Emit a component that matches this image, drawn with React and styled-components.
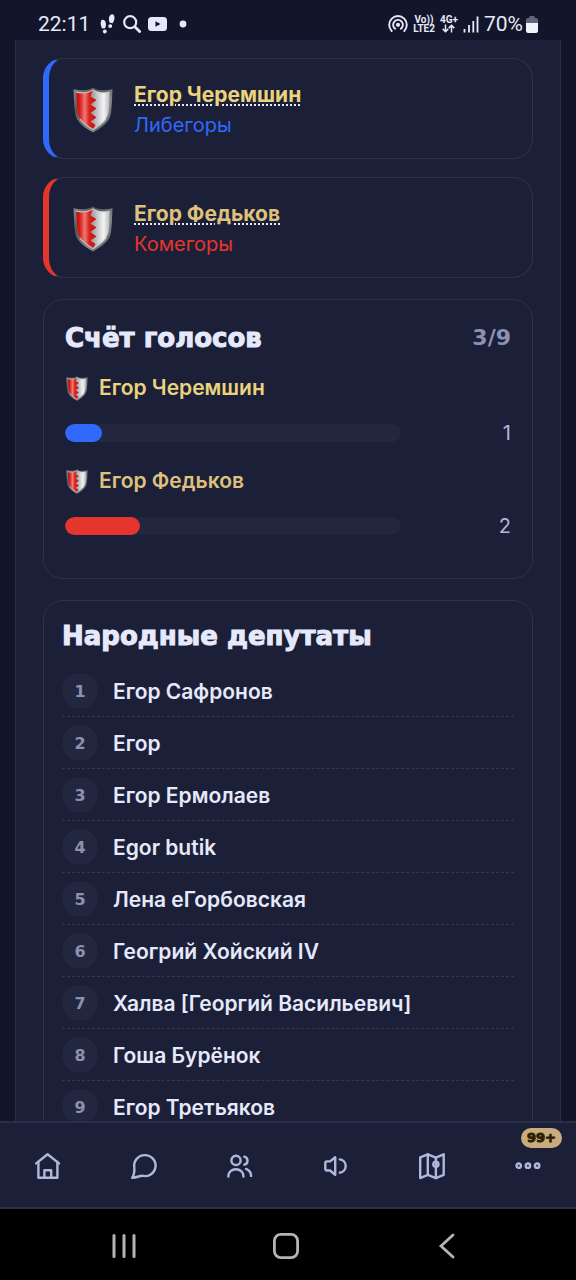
import React from 'react'
import styled, { createGlobalStyle } from 'styled-components';

const GlobalStyle = createGlobalStyle`
* { box-sizing: border-box; }
body {
margin:0;
background-color:#13162a;
color:#e6e9fb;
font-family: Inter, "Noto Sans", sans-serif;
}
`;

const Screen = styled.div`
display: flex;
flex-direction: column;
height:100vh;
`;

const StatusBar = styled.header`
display: flex;
justify-content: space-between;
align-items: center;
height:40px;
padding:8px 38px 0px 38px;
font-family: Roboto, sans-serif;
font-size:21px;
line-height:32px;
flex-shrink:0;
`;

const StatusGroup = styled.div`
display: flex;
align-items: center;
gap:${(p) => p.$gap}px;
`;

const Clock = styled.time`
padding-right:3px;
`;

const Network = styled.span`
display: flex;
flex-direction: column;
align-items: center;
font-size:10px;
font-weight:700;
line-height:9px;
`;

const Page = styled.main`
flex:1;
min-height:0;
overflow:hidden;
display: flex;
flex-direction: column;
gap:21px;
margin:0px 15px;
padding:18px 27px 0px 27px;
border:solid #2c3047;
border-width:0px 1px;
background-color:#1b2038;
`;

const Candidates = styled.section`
display: flex;
flex-direction: column;
gap:18px;
`;

const CandidateCard = styled.article`
display: flex;
align-items: center;
gap:21px;
padding:20px 24px 18px 24px;
border:solid 1px #2e3248;
border-left:solid 6px ${(p) => p.$color};
border-radius:20px;
`;

const CandidateName = styled.a`
display: block;
color:${(p) => p.$color};
font-size:21px;
font-weight:700;
line-height:31px;
text-decoration: underline dotted 2px #e6e9fb;
text-underline-offset: 2px;
`;

const Party = styled.div`
color:${(p) => p.$color};
font-size:20px;
line-height:30px;
`;

const Card = styled.section`
flex-shrink:0;
padding:${(p) => p.$pad};
border:solid 1px #2e3248;
border-radius:20px;
`;

const CardHead = styled.div`
display: flex;
justify-content: space-between;
align-items: center;
margin-bottom:${(p) => p.$space}px;
`;

const Title = styled.h2`
margin:0;
font-family: "DejaVu Sans", sans-serif;
font-size:26px;
font-weight:700;
line-height:34px;
-webkit-text-stroke:1px currentColor;
`;

const Total = styled.span`
color:#8b91b3;
font-family: "DejaVu Sans", sans-serif;
font-size:22px;
font-weight:700;
line-height:30px;
`;

const Score = styled.div`
margin-bottom:18px;
`;

const ScoreName = styled.div`
display: flex;
align-items: center;
gap:11px;
padding-left:1px;
margin-bottom:15px;
color:${(p) => p.$color};
font-size:21px;
font-weight:600;
line-height:30px;
`;

const ScoreRow = styled.div`
display: flex;
align-items: center;
gap:20px;
`;

const Track = styled.div`
flex:1;
height:18px;
border-radius:9px;
background-color:#22263f;
overflow:hidden;
`;

const Fill = styled.div`
height:100%;
border-radius:9px;
background-color:${(p) => p.$color};
`;

const Votes = styled.span`
width:90px;
text-align: right;
color:#b3b8d4;
font-size:20px;
line-height:30px;
`;

const List = styled.ol`
margin:0;
padding:0;
list-style: none;
`;

const Row = styled.li`
display: flex;
align-items: center;
gap:15px;
height:52px;
padding-top:1px;
border-bottom:dashed 1px #34384c;
font-size:21px;
font-weight:600;
`;

const Num = styled.span`
display: flex;
align-items: center;
justify-content: center;
width:36px;
height:36px;
border-radius:50%;
background-color:#22263f;
color:#8b91b3;
font-family: "DejaVu Sans", sans-serif;
font-size:16px;
font-weight:700;
`;

const Nav = styled.nav`
display: flex;
flex-shrink:0;
height:88px;
border:solid #2a2e48;
border-width:2px 0px;
background-color:#1b2038;
`;

const NavLink = styled.a`
position: relative;
flex:1;
display: flex;
align-items: center;
justify-content: center;
padding-top:2px;
color:#b0b7dc;
`;

const Badge = styled.span`
position: absolute;
top:5px;
right:14px;
padding:0px 6px;
border-radius:10px;
background-color:#c9ac7c;
color:#2e2000;
font-family: "DejaVu Sans", sans-serif;
font-size:13px;
font-weight:700;
line-height:20px;
-webkit-text-stroke:1px currentColor;
`;

const SystemBar = styled.footer`
display: flex;
flex-shrink:0;
height:71px;
padding:0px 48px 0px 43px;
background-color:#000;
`;

const SystemBtn = styled.button`
flex:1;
display: flex;
align-items: center;
justify-content: center;
padding:3px 0px 0px 0px;
border: none;
background: none;
color:#b4b4b4;
`;

const Shield = ({ id, width, height }) => (
  <svg width={width} height={height} viewBox="0 0 40 46" aria-hidden="true">
    <defs>
      <linearGradient id={id + 'rim'} x1="0" y1="0" x2="1" y2="1">
        <stop offset="0" stopColor="#8a8f94" />
        <stop offset="0.3" stopColor="#4f555a" />
        <stop offset="0.65" stopColor="#858b8e" />
        <stop offset="1" stopColor="#4a4f52" />
      </linearGradient>
      <linearGradient id={id + 'red'} x1="0" y1="0" x2="1" y2="0">
        <stop offset="0" stopColor="#b3100e" />
        <stop offset="0.18" stopColor="#d91c18" />
        <stop offset="0.42" stopColor="#ee7a74" />
        <stop offset="0.65" stopColor="#d8211c" />
        <stop offset="1" stopColor="#c0140f" />
      </linearGradient>
      <linearGradient id={id + 'white'} x1="0" y1="0" x2="1" y2="0">
        <stop offset="0.4" stopColor="#8e8e92" />
        <stop offset="0.68" stopColor="#d4d4d6" />
        <stop offset="0.82" stopColor="#f4f4f4" />
        <stop offset="1" stopColor="#b6b6b8" />
      </linearGradient>
    </defs>
    <path d="M20 0.5C24 3.4 31 4.2 39.5 2.2C39.2 9 39 17 38 26C36.8 35 29 40.5 20 45.5C11 40.5 3.2 35 2 26C1 17 0.8 9 0.5 2.2C9 4.2 16 3.4 20 0.5Z" fill={`url(#${id}rim)`} />
    <path d="M20 2.8C24.5 5.9 30 6.6 36.8 5.2C36.6 11 36.3 18 35.6 25C34.6 32.7 28 37.8 20 42.6C12 37.8 5.4 32.7 4.4 25C3.7 18 3.4 11 3.2 5.2C10 6.6 15.5 5.9 20 2.8Z" fill={`url(#${id}white)`} />
    <path d="M20 2.8L17.5 9.5L23.5 13L17.5 17.5L23.5 21.5L17.5 26L23.5 30.5L17.5 34.5L22.5 38L20 42.6C12 37.8 5.4 32.7 4.4 25C3.7 18 3.4 11 3.2 5.2C10 6.6 15.5 5.9 20 2.8Z" fill={`url(#${id}red)`} />
    <path d="M3.2 5.2C10 6.6 15.5 5.9 20 2.8C24.5 5.9 30 6.6 36.8 5.2" fill="none" stroke="#d5d8da" strokeWidth="1" />
    <path d="M7 32C10 36.5 15 39.5 20 42.6C25 39.5 30 36.5 33 32" fill="none" stroke="#c3c7ca" strokeWidth="1.2" />
  </svg>
)

const NavIcon = ({ children }) => (
  <svg width="32" height="32" viewBox="0 0 32 32" fill="none" stroke="currentColor" strokeWidth="2.4" strokeLinecap="round" strokeLinejoin="round" aria-hidden="true">
    {children}
  </svg>
)

const candidates = [
  { name: 'Егор Черемшин', party: 'Либегоры', color: '#3069fb', gold: '#ebd37d', votes: 1 },
  { name: 'Егор Федьков', party: 'Комегоры', color: '#e5352d', gold: '#dfc07c', votes: 2 },
];

const seats = 9;

const deputies = [
  'Егор Сафронов',
  'Егор',
  'Егор Ермолаев',
  'Egor butik',
  'Лена еГорбовская',
  'Геогрий Хойский IV',
  'Халва [Георгий Васильевич]',
  'Гоша Бурёнок',
  'Егор Третьяков',
];

const navItems = [
  {
    label: 'Главная',
    icon: <><path d="M4.2 13.4L15.6 4.2L27 13.4" /><path d="M6.4 12V27.8H25.4V12" /><path d="M12.4 27.5V20.3H19.2V27.5" /></>,
  },
  {
    label: 'Сообщения',
    icon: <path d="M4.2 27.8C6.4 24.4 6.6 21.3 6.3 17.3A10.7 10.5 0 1 1 13.9 25.7C11.1 26.2 8.2 27.5 4.2 27.8Z" />,
  },
  {
    label: 'Люди',
    icon: <><circle cx="12" cy="10.4" r="4.6" /><path d="M4.4 26.6V26.1A7.5 6.9 0 0 1 19.4 26.1V26.6" /><path d="M20.3 6.7A4.1 4.1 0 0 1 20.3 14.7" /><path d="M22.1 18.9C25.4 20.3 27.1 22.7 27.1 25.9" /></>,
  },
  {
    label: 'Новости',
    icon: <><path d="M15.2 7.2V24.7L10.1 20.5H7Q5.3 20.5 5.3 18.7V13.2Q5.3 11.4 7 11.4H10.1Z" /><path d="M19.8 9.4A6.7 6.7 0 0 1 19.8 22.7" /></>,
  },
  {
    label: 'Карта',
    icon: <><path d="M4.2 7.4L11.8 4.3L19.9 7.7L27.7 4.3V24.9L19.9 28.1L11.8 24.9L4.2 28.1Z" /><path d="M11.8 4.3V24.9M19.9 7.7V28.1" /><circle cx="19.9" cy="14.3" r="2.6" /></>,
  },
  {
    label: 'Ещё',
    badge: '99+',
    icon: <><circle cx="6.7" cy="15.7" r="2.2" /><circle cx="15.9" cy="15.7" r="2.2" /><circle cx="25.1" cy="15.7" r="2.2" /></>,
  },
];

const App = () => {
  return (
    <Screen>
      <GlobalStyle />
      <StatusBar>
        <StatusGroup $gap={7}>
          <Clock>22:11</Clock>
          <svg width="16" height="20" viewBox="1 0 16 20" fill="currentColor" aria-hidden="true">
            <path d="M3.2 5.8C5.7 5.2 6.8 7.7 6.9 10C7 12 6.6 13.7 5.9 14.2L3.4 14.6C1.6 12.8 0.8 6.5 3.2 5.8Z" />
            <ellipse cx="5.8" cy="17.4" rx="1.9" ry="2" />
            <path d="M13.6 0.3C11 0 10 2.5 9.9 4.7C9.9 6.7 10.2 8 10.8 8.7L13.6 9.2C15.8 6.7 16.4 0.8 13.6 0.3Z" />
            <ellipse cx="11.2" cy="12.1" rx="2" ry="1.9" />
          </svg>
          <svg width="18" height="18" viewBox="0 0 18 18" fill="none" stroke="currentColor" strokeWidth="2.2" strokeLinecap="round" aria-hidden="true">
            <circle cx="7.2" cy="7.2" r="6" />
            <path d="M11.8 11.8L16.6 16.6" strokeWidth="2.8" />
          </svg>
          <svg width="19" height="14" viewBox="0 0 19 14" aria-hidden="true">
            <rect width="19" height="14" rx="3.5" fill="currentColor" />
            <path d="M7.5 4.2L12.5 7L7.5 9.8Z" fill="#13162a" />
          </svg>
          <svg width="16" height="8" viewBox="0 0 16 8" aria-hidden="true">
            <circle cx="9" cy="4" r="3.4" fill="currentColor" />
          </svg>
        </StatusGroup>
        <StatusGroup $gap={5}>
          <svg width="20" height="20" viewBox="0 0 20 20" fill="none" stroke="currentColor" strokeWidth="1.9" strokeLinecap="round" aria-hidden="true">
            <circle cx="10" cy="10.8" r="2.1" fill="currentColor" stroke="none" />
            <path d="M7.2 14.8A4.9 4.9 0 1 1 12.8 14.8" />
            <path d="M3.7 17A8.8 8.8 0 1 1 16.3 17" />
          </svg>
          <Network><span>Vo))</span><span>LTE2</span></Network>
          <Network>
            <span>4G+</span>
            <svg width="13" height="9" viewBox="0 0 13 9" fill="none" stroke="currentColor" strokeWidth="1.5" aria-hidden="true">
              <path d="M3.5 0.5V7.5M0.7 4.9L3.5 7.7L6.3 4.9M9.5 8.5V1.5M6.7 4.1L9.5 1.3L12.3 4.1" />
            </svg>
          </Network>
          <svg width="16" height="17" viewBox="0 0 16 17" stroke="currentColor" strokeWidth="1.8" aria-hidden="true">
            <path d="M1.5 13V16.5M6 9V16.5M10.3 5V16.5M14.5 0.5V16.5" />
          </svg>
          <StatusGroup $gap={3}>
            <span>70%</span>
            <svg width="12" height="17" viewBox="0 0 12 17" aria-hidden="true">
              <path d="M3.5 0H8.5V2H10Q12 2 12 4V14.5Q12 17 9.5 17H2.5Q0 17 0 14.5V4Q0 2 2 2H3.5Z" fill="#62667c" />
              <path d="M0 7H12V14.5Q12 17 9.5 17H2.5Q0 17 0 14.5Z" fill="#f1f3fd" />
            </svg>
          </StatusGroup>
        </StatusGroup>
      </StatusBar>

      <Page>
        <Candidates>
          {candidates.map((c, i) => (
            <CandidateCard key={c.name} $color={c.color}>
              <Shield id={'card' + i} width={40} height={46} />
              <div>
                <CandidateName href="#" $color={c.gold}>{c.name}</CandidateName>
                <Party $color={c.color}>{c.party}</Party>
              </div>
            </CandidateCard>
          ))}
        </Candidates>

        <Card $pad="21px 21px 19px 21px">
          <CardHead $space={18}>
            <Title>Счёт голосов</Title>
            <Total>3/9</Total>
          </CardHead>
          {candidates.map((c, i) => (
            <Score key={c.name}>
              <ScoreName $color={c.gold}>
                <Shield id={'score' + i} width={22} height={25} />
                {c.name}
              </ScoreName>
              <ScoreRow>
                <Track>
                  <Fill $color={c.color} style={{ width: `${(c.votes / seats) * 100}%` }} />
                </Track>
                <Votes>{c.votes}</Votes>
              </ScoreRow>
            </Score>
          ))}
        </Card>

        <Card $pad="18px">
          <CardHead $space={12}>
            <Title>Народные депутаты</Title>
          </CardHead>
          <List>
            {deputies.map((name, i) => (
              <Row key={name}>
                <Num>{i + 1}</Num>
                {name}
              </Row>
            ))}
          </List>
        </Card>
      </Page>

      <Nav>
        {navItems.map((item) => (
          <NavLink key={item.label} href="#" aria-label={item.label}>
            <NavIcon>{item.icon}</NavIcon>
            {item.badge && <Badge>{item.badge}</Badge>}
          </NavLink>
        ))}
      </Nav>

      <SystemBar>
        <SystemBtn aria-label="Недавние">
          <svg width="26" height="26" viewBox="0 0 26 26" stroke="currentColor" strokeWidth="3" strokeLinecap="round">
            <path d="M3 2.5V23.5M13 2.5V23.5M23 2.5V23.5" />
          </svg>
        </SystemBtn>
        <SystemBtn aria-label="Домой">
          <svg width="26" height="26" viewBox="0 0 26 26" fill="none" stroke="currentColor" strokeWidth="2.8">
            <rect x="1.4" y="1.4" width="23.2" height="23.2" rx="6.5" />
          </svg>
        </SystemBtn>
        <SystemBtn aria-label="Назад">
          <svg width="26" height="26" viewBox="0 0 26 26" fill="none" stroke="currentColor" strokeWidth="2.8" strokeLinecap="round">
            <path d="M19 2L7 13L19 24" />
          </svg>
        </SystemBtn>
      </SystemBar>
    </Screen>
  )
}

export default App
